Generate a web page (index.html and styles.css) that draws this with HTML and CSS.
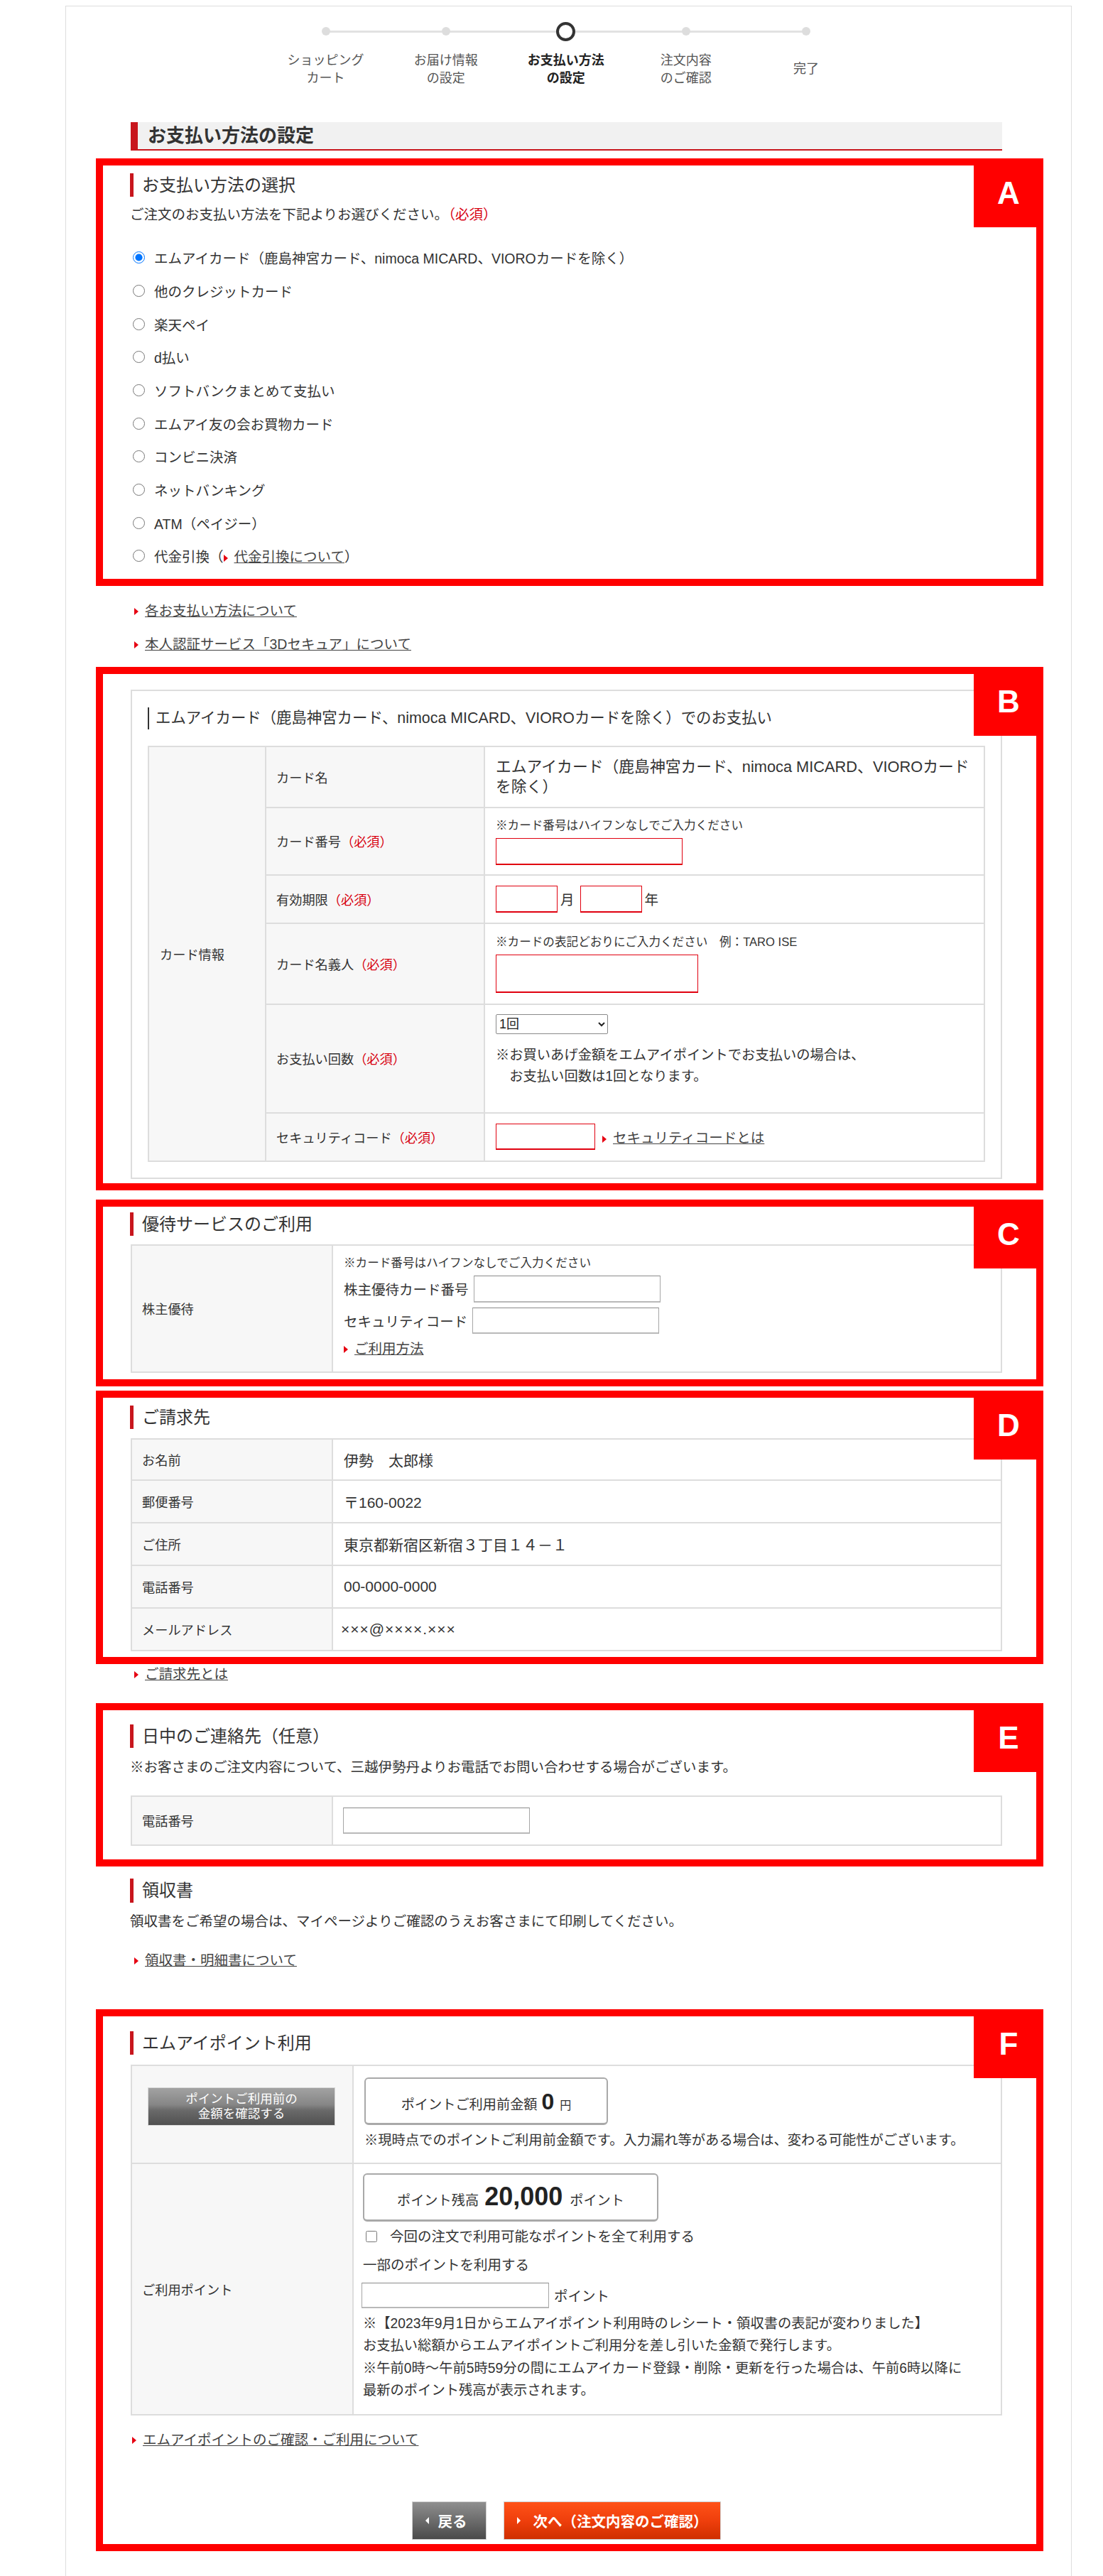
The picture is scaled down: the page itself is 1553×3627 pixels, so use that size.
FILE: index.html
```html
<!DOCTYPE html>
<html lang="ja">
<head>
<meta charset="utf-8">
<title>お支払い方法の設定</title>
<link rel="stylesheet" href="styles.css">
</head>
<body>
<div class="page">
  <ol class="stepper">
    <li class="step"><span class="dot-wrap"><span class="dot"></span></span><span class="step-label">ショッピング<br>カート</span></li>
    <li class="step"><span class="dot-wrap"><span class="dot"></span></span><span class="step-label">お届け情報<br>の設定</span></li>
    <li class="step current"><span class="dot-wrap"><span class="dot"></span></span><span class="step-label">お支払い方法<br>の設定</span></li>
    <li class="step"><span class="dot-wrap"><span class="dot"></span></span><span class="step-label">注文内容<br>のご確認</span></li>
    <li class="step"><span class="dot-wrap"><span class="dot"></span></span><span class="step-label">完了</span></li>
  </ol>

  <h1 class="title-bar">お支払い方法の設定</h1>

  <div class="content">
    <section class="anno anno-a">
      <span class="anno-tag">A</span>
      <h2 class="sec-head">お支払い方法の選択</h2>
      <p class="desc">ご注文のお支払い方法を下記よりお選びください。<span class="req">（必須）</span></p>
      <ul class="radio-list">
        <li><label><input type="radio" name="pay" checked>エムアイカード（鹿島神宮カード、nimoca MICARD、VIOROカードを除く）</label></li>
        <li><label><input type="radio" name="pay">他のクレジットカード</label></li>
        <li><label><input type="radio" name="pay">楽天ペイ</label></li>
        <li><label><input type="radio" name="pay">d払い</label></li>
        <li><label><input type="radio" name="pay">ソフトバンクまとめて支払い</label></li>
        <li><label><input type="radio" name="pay">エムアイ友の会お買物カード</label></li>
        <li><label><input type="radio" name="pay">コンビニ決済</label></li>
        <li><label><input type="radio" name="pay">ネットバンキング</label></li>
        <li><label><input type="radio" name="pay">ATM（ペイジー）</label></li>
        <li><label><input type="radio" name="pay">代金引換（<a class="arrow-link" href="#">代金引換について</a>）</label></li>
      </ul>
    </section>

    <ul class="links">
      <li><a class="arrow-link" href="#">各お支払い方法について</a></li>
      <li><a class="arrow-link" href="#">本人認証サービス「3Dセキュア」について</a></li>
    </ul>

    <section class="anno anno-b">
      <span class="anno-tag">B</span>
      <div class="panel">
        <h3 class="panel-head">エムアイカード（鹿島神宮カード、nimoca MICARD、VIOROカードを除く）でのお支払い</h3>
        <table class="tbl card-table">
          <colgroup><col class="cc1"><col class="cc2"><col class="cc3"></colgroup>
          <tr class="r-name">
            <td class="th th-group" rowspan="6">カード情報</td>
            <td class="th th-sub">カード名</td>
            <td class="val val-name">エムアイカード（鹿島神宮カード、nimoca MICARD、VIOROカードを除く）</td>
          </tr>
          <tr class="r-num">
            <td class="th th-sub">カード番号<span class="req">（必須）</span></td>
            <td class="val"><p class="note">※カード番号はハイフンなしでご入力ください</p><input class="in-red in-num" type="text"></td>
          </tr>
          <tr class="r-exp">
            <td class="th th-sub">有効期限<span class="req">（必須）</span></td>
            <td class="val"><span class="exp"><input class="in-red in-exp" type="text"><span class="exp-unit">月</span><input class="in-red in-exp" type="text"><span class="exp-unit">年</span></span></td>
          </tr>
          <tr class="r-holder">
            <td class="th th-sub">カード名義人<span class="req">（必須）</span></td>
            <td class="val"><p class="note">※カードの表記どおりにご入力ください　例：TARO ISE</p><input class="in-red in-holder" type="text"></td>
          </tr>
          <tr class="r-times">
            <td class="th th-sub">お支払い回数<span class="req">（必須）</span></td>
            <td class="val val-top"><select class="sel-times"><option>1回</option></select>
              <p class="times-note">※お買いあげ金額をエムアイポイントでお支払いの場合は、<br>　お支払い回数は1回となります。</p></td>
          </tr>
          <tr class="r-sec">
            <td class="th th-sub">セキュリティコード<span class="req">（必須）</span></td>
            <td class="val"><span class="sec-line"><input class="in-red in-sec" type="text"><a class="arrow-link" href="#">セキュリティコードとは</a></span></td>
          </tr>
        </table>
      </div>
    </section>

    <section class="anno anno-c">
      <span class="anno-tag">C</span>
      <h2 class="sec-head">優待サービスのご利用</h2>
      <table class="tbl tbl-wide">
        <colgroup><col class="wc1"><col></colgroup>
        <tr>
          <td class="th">株主優待</td>
          <td class="val val-yutai">
            <p class="note">※カード番号はハイフンなしでご入力ください</p>
            <div class="yutai-row"><span>株主優待カード番号</span><input class="in-gray" type="text"></div>
            <div class="yutai-row yutai-row2"><span>セキュリティコード</span><input class="in-gray" type="text"></div>
            <p class="yutai-link"><a class="arrow-link" href="#">ご利用方法</a></p>
          </td>
        </tr>
      </table>
    </section>

    <section class="anno anno-d">
      <span class="anno-tag">D</span>
      <h2 class="sec-head">ご請求先</h2>
      <table class="tbl tbl-wide bill">
        <colgroup><col class="wc1"><col></colgroup>
        <tr><td class="th">お名前</td><td class="val">伊勢　太郎様</td></tr>
        <tr><td class="th">郵便番号</td><td class="val">〒160-0022</td></tr>
        <tr><td class="th">ご住所</td><td class="val">東京都新宿区新宿３丁目１４－１</td></tr>
        <tr><td class="th">電話番号</td><td class="val">00-0000-0000</td></tr>
        <tr><td class="th">メールアドレス</td><td class="val mail">×××@××××.×××</td></tr>
      </table>
    </section>

    <p class="single-link"><a class="arrow-link" href="#">ご請求先とは</a></p>

    <section class="anno anno-e">
      <span class="anno-tag">E</span>
      <h2 class="sec-head">日中のご連絡先（任意）</h2>
      <p class="e-note">※お客さまのご注文内容について、三越伊勢丹よりお電話でお問い合わせする場合がございます。</p>
      <table class="tbl tbl-wide tel">
        <colgroup><col class="wc1"><col></colgroup>
        <tr><td class="th">電話番号</td><td class="val"><input class="in-gray in-tel" type="text"></td></tr>
      </table>
    </section>

    <section class="receipt">
      <h2 class="sec-head">領収書</h2>
      <p class="receipt-text">領収書をご希望の場合は、マイページよりご確認のうえお客さまにて印刷してください。</p>
      <p class="receipt-link"><a class="arrow-link" href="#">領収書・明細書について</a></p>
    </section>

    <section class="anno anno-f">
      <span class="anno-tag">F</span>
      <h2 class="sec-head">エムアイポイント利用</h2>
      <table class="tbl tbl-wide points">
        <colgroup><col class="pc1"><col></colgroup>
        <tr class="p-r1">
          <td class="th th-btn"><button class="gray-btn" type="button">ポイントご利用前の<br>金額を確認する</button></td>
          <td class="val val-pt">
            <div class="pt-box pt-box1"><span class="pt-lbl">ポイントご利用前金額</span><b class="pt-num">0</b><span class="pt-unit">円</span></div>
            <p class="pt-note">※現時点でのポイントご利用前金額です。入力漏れ等がある場合は、変わる可能性がございます。</p>
          </td>
        </tr>
        <tr class="p-r2">
          <td class="th">ご利用ポイント</td>
          <td class="val val-pt2">
            <div class="pt-box pt-box2"><span class="pt-lbl">ポイント残高</span><b class="pt-num big">20,000</b><span class="pt-lbl">ポイント</span></div>
            <label class="chk-line"><input type="checkbox">今回の注文で利用可能なポイントを全て利用する</label>
            <p class="part-line">一部のポイントを利用する</p>
            <div class="use-line"><input class="in-gray in-use" type="text"><span>ポイント</span></div>
            <p class="pt-notes">※【2023年9月1日からエムアイポイント利用時のレシート・領収書の表記が変わりました】<br>お支払い総額からエムアイポイントご利用分を差し引いた金額で発行します。<br>※午前0時～午前5時59分の間にエムアイカード登録・削除・更新を行った場合は、午前6時以降に<br>最新のポイント残高が表示されます。</p>
          </td>
        </tr>
      </table>
      <p class="f-link"><a class="arrow-link" href="#">エムアイポイントのご確認・ご利用について</a></p>
      <div class="nav-btns">
        <button class="btn-back" type="button">戻る</button>
        <button class="btn-next" type="button">次へ（注文内容のご確認）</button>
      </div>
    </section>
  </div>
</div>
</body>
</html>
```

FILE: styles.css
```css
* { box-sizing: border-box; }

body {
  margin: 0;
  background: #fff;
  color: #333;
  font-family: "Liberation Sans", "Noto Sans CJK JP", sans-serif;
}

p, h1, h2, h3, ul, ol { margin: 0; padding: 0; }
ul, ol { list-style: none; }

.page {
  margin: 8px 0 0 92px;
  width: 1417px;
  border: 1px solid #ddd;
  padding-bottom: 36px;
}

/* stepper */
.stepper {
  position: relative;
  display: flex;
  margin: 21px 0 0 281px;
  width: 845.5px;
}
.stepper::before {
  content: "";
  position: absolute;
  left: 84.5px;
  right: 84.5px;
  top: 12.5px;
  height: 3px;
  background: #e2e2e2;
}
.step {
  width: 169.1px;
  display: flex;
  flex-direction: column;
  align-items: center;
}
.dot-wrap {
  position: relative;
  height: 28px;
  display: flex;
  align-items: center;
  justify-content: center;
}
.dot {
  width: 12px;
  height: 12px;
  border-radius: 50%;
  background: #ddd;
}
.step.current .dot {
  width: 27px;
  height: 27px;
  border: 4px solid #333;
  background: #fff;
}
.step-label {
  margin-top: 14.5px;
  height: 50px;
  display: flex;
  align-items: center;
  text-align: center;
  font-size: 18px;
  line-height: 25px;
  color: #555;
}
.step.current .step-label { font-weight: bold; color: #222; }

/* title */
.title-bar {
  margin: 49.5px 0 0 91px;
  width: 1227px;
  height: 40px;
  background: #f1f1f1;
  border-left: 10px solid #c8161d;
  border-bottom: 2px solid #c8161d;
  padding-left: 14px;
  font-size: 26px;
  line-height: 38px;
  font-weight: bold;
  color: #333;
}

.content {
  margin: 11px 0 0 42px;
  width: 1334px;
}

/* annotation frames */
.anno {
  position: relative;
  border: 10px solid #ff0000;
  padding: 0 48px 0 38px;
}
.anno-tag {
  position: absolute;
  top: -10px;
  right: -10px;
  width: 98px;
  height: 97px;
  background: #ff0000;
  color: #fff;
  font-family: "Liberation Sans", sans-serif;
  font-weight: bold;
  font-size: 44px;
  line-height: 97px;
  text-align: center;
  z-index: 2;
}

.sec-head {
  height: 33px;
  border-left: 5px solid #c8161d;
  padding-left: 12px;
  font-size: 24px;
  line-height: 33px;
  font-weight: normal;
  color: #333;
}

.req { color: #d7000f; }

a { color: #333; }
.arrow-link { color: #444; text-decoration: underline; }
.arrow-link::before {
  content: "";
  display: inline-block;
  border-left: 6px solid #e60012;
  border-top: 5px solid transparent;
  border-bottom: 5px solid transparent;
  margin-right: 9px;
  vertical-align: middle;
}

/* A */
.anno-a .sec-head { margin-top: 11px; }
.desc { margin-top: 10px; font-size: 19.5px; line-height: 30px; }
.radio-list { margin-top: 22.5px; padding-bottom: 8.5px; }
.radio-list li {
  height: 46.67px;
  display: flex;
  align-items: center;
  font-size: 19.5px;
}
.radio-list label { display: flex; align-items: center; }
.radio-list input[type="radio"] {
  width: 17px;
  height: 17px;
  margin: 0 13px 0 4px;
}

.links { margin: 12px 0 8px 54px; }
.links li { font-size: 19.5px; line-height: 47px; }

/* generic tables */
.tbl {
  border-collapse: separate;
  border-spacing: 0;
  table-layout: fixed;
  border-top: 2px solid #ddd;
  border-left: 2px solid #ddd;
}
.tbl td {
  border-right: 2px solid #ddd;
  border-bottom: 2px solid #ddd;
}
.tbl .th {
  background: #f7f7f7;
  font-size: 18.2px;
  vertical-align: middle;
  padding-left: 14px;
  color: #333;
}
.tbl .val { vertical-align: middle; font-size: 19.5px; }
.tbl-wide { margin-left: 1px; width: 1227px; }
.wc1 { width: 283px; }

/* B */
.panel {
  margin: 22px 0 6px 1px;
  border: 2px solid #ddd;
  padding: 23px 22px 22px;
}
.panel-head {
  height: 31px;
  border-left: 2px solid #333;
  padding-left: 9px;
  font-size: 21.4px;
  line-height: 31px;
  font-weight: normal;
  white-space: nowrap;
}
.card-table { margin-top: 23px; width: 1179px; }
.cc1 { width: 165px; }
.cc2 { width: 308px; }
.card-table .th-group { padding-left: 15px; }
.card-table .th-sub { padding-left: 14px; }
.card-table .val { padding: 0 12px 0 15px; }
.r-name td { height: 86px; }
.r-num td { height: 95px; }
.r-exp td { height: 68px; }
.r-holder td { height: 114px; }
.r-times td { height: 153px; }
.r-sec td { height: 68px; }
.card-table .val-name { font-size: 21.8px; line-height: 28px; }
.card-table .val-top { vertical-align: top; padding-top: 13px; }
.note { font-size: 16.6px; line-height: 24px; color: #333; }
input[type="text"] { display: block; font-size: 16px; background: #fff; }
.in-red { border: 1px solid #e0000f; border-bottom-width: 2px; }
.in-num { margin-top: 5px; width: 263px; height: 38px; }
.exp { display: flex; align-items: center; }
.in-exp { width: 87px; height: 38px; }
.exp-unit { margin: 0 8px 0 4px; }
.in-holder { margin-top: 5px; width: 285px; height: 54px; }
.sel-times {
  display: block;
  width: 158px;
  height: 28px;
  font-size: 18px;
  font-family: "Liberation Sans", "Noto Sans CJK JP", sans-serif;
  border: 1px solid #8a8a8a;
  border-radius: 2px;
  background: #fff;
  color: #222;
}
.times-note { margin-top: 15px; font-size: 19.3px; line-height: 30px; }
.sec-line { display: flex; align-items: center; }
.in-sec { width: 140px; height: 37px; }
.sec-line .arrow-link { margin-left: 10px; }

/* C */
.anno-c { margin-top: 13px; }
.anno-c .sec-head { margin-top: 8px; }
.anno-c .tbl { margin-top: 12px; margin-bottom: 9px; }
.val-yutai { padding: 13px 15px 18px; vertical-align: top !important; }
.yutai-row { margin-top: 5px; display: flex; align-items: center; }
.yutai-row2 { margin-top: 7px; }
.in-gray {
  border: 1px solid #a6a6a6;
  border-top-color: #8a8a8a;
  border-bottom-width: 2px;
  border-bottom-color: #b9b9b9;
}
.yutai-row .in-gray { margin-left: 7px; width: 263px; height: 38px; }
.yutai-row2 .in-gray { height: 37px; }
.yutai-link { margin-top: 7px; line-height: 28px; }

/* D */
.anno-d { margin-top: 6px; }
.anno-d .sec-head { margin-top: 11px; }
.bill { margin-top: 13px; margin-bottom: 8px; }
.bill td { height: 60px; }
.bill tr:first-child td { height: 58px; }
.bill .val { padding-left: 15px; font-size: 21px; }
.bill .mail { padding-left: 11px; letter-spacing: 1px; }

.single-link { margin: 0 0 27px 54px; font-size: 19.5px; line-height: 28px; }

/* E */
.anno-e .sec-head { margin-top: 20px; }
.e-note { margin-top: 13px; font-size: 19.5px; line-height: 28px; }
.tel { margin-top: 26px; margin-bottom: 19px; }
.tel td { height: 69px; }
.tel .val { padding-left: 14px; }
.in-tel { width: 263px; height: 37px; }

/* receipt */
.receipt { padding-left: 48px; }
.receipt .sec-head { margin-top: 17px; height: 34px; }
.receipt-text { margin-top: 12px; font-size: 19.5px; line-height: 28px; }
.receipt-link { margin: 27px 0 0 6px; font-size: 19.5px; line-height: 28px; }

/* F */
.anno-f { margin-top: 55px; }
.anno-f .sec-head { margin-top: 21px; }
.points { margin-top: 14px; }
.pc1 { width: 312px; }
.p-r1 td { height: 138px; }
.p-r2 td { height: 354px; }
.th-btn { vertical-align: top !important; padding: 30px 0 0 22px !important; }
.gray-btn {
  display: block;
  width: 264px;
  height: 54px;
  border: 1px solid #d8d8d8;
  background: linear-gradient(#a2a2a2 0%, #868686 45%, #6a6a6a 60%, #505050 100%);
  color: #fff;
  font-family: "Liberation Sans", "Noto Sans CJK JP", sans-serif;
  font-weight: normal;
  font-size: 17.5px;
  line-height: 21px;
  padding: 0;
}
.val-pt { vertical-align: top !important; padding: 16px 15px 0; }
.val-pt2 { vertical-align: top !important; padding: 13px 13px 0 13px; }
.pt-box {
  display: flex;
  align-items: baseline;
  justify-content: center;
  border: 2px solid #a9a9a9;
  border-bottom-width: 3px;
  border-radius: 6px;
  background: #fff;
}
.pt-box1 { width: 343px; height: 67px; padding-top: 14px; }
.pt-box2 { width: 416px; height: 68px; padding-top: 10px; }
.pt-lbl { font-size: 19.2px; }
.pt-num { font-size: 32px; margin: 0 8px 0 6px; color: #222; }
.pt-num.big { font-size: 36px; margin: 0 10px 0 8px; }
.pt-unit { font-size: 16px; }
.pt-note { margin-top: 8px; font-size: 19.3px; line-height: 28px; }
.chk-line { margin-top: 7px; display: flex; align-items: center; font-size: 19.5px; line-height: 28px; }
.chk-line input { width: 16px; height: 18px; margin: 0 18px 0 4px; }
.part-line { margin-top: 12px; font-size: 19.5px; line-height: 28px; }
.use-line { margin-top: 11px; display: flex; align-items: center; }
.in-use { width: 264px; height: 36px; margin-left: -2px; }
.use-line span { margin-left: 7px; }
.pt-notes { margin-top: 6px; font-size: 19.3px; line-height: 31.5px; }

.f-link { margin: 20px 0 0 3px; font-size: 19.5px; line-height: 28px; }

.nav-btns {
  display: flex;
  justify-content: center;
  gap: 24px;
  margin-top: 73px;
  padding-bottom: 6px;
}
.nav-btns button {
  height: 54px;
  border: 1px solid #cfcfcf;
  color: #fff;
  font-family: "Liberation Sans", "Noto Sans CJK JP", sans-serif;
  font-weight: bold;
  font-size: 20.5px;
  padding: 0 0 0 18px;
  display: flex;
  align-items: center;
  justify-content: flex-start;
}
.nav-btns button::before {
  content: "";
  display: inline-block;
  border-top: 5px solid transparent;
  border-bottom: 5px solid transparent;
}
.btn-back {
  width: 105px;
  background: linear-gradient(#8f8f8f 0%, #6c6c6c 50%, #4a4a4a 100%);
}
.btn-back::before { border-right: 5px solid #fff; margin-right: 13px; }
.btn-next {
  width: 306px;
  background: linear-gradient(#ff5218 0%, #ef3f0c 50%, #cf2f00 100%);
}
.btn-next::before { border-left: 5px solid #fff; margin-right: 18px; }
```
